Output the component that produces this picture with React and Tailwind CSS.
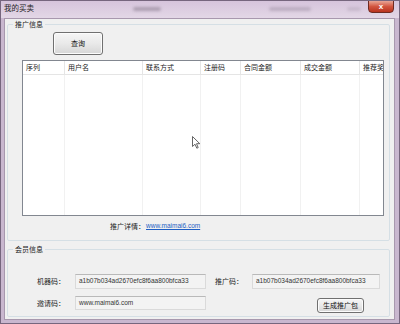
const cols = [
  { name: "序列", w: "w-[42px]" },
  { name: "用户名", w: "w-[78px]" },
  { name: "联系方式", w: "w-[58px]" },
  { name: "注册码", w: "w-[40px]" },
  { name: "合同金额", w: "w-[60px]" },
  { name: "成交金额", w: "w-[59px]" },
  { name: "推荐奖", w: "w-[60px]" },
];

function WinButton({ children, className }) {
  return (
    <button
      className={`border border-[#707070] rounded-[3px] bg-gradient-to-b from-[#f6f6f6] via-[#e9e9e9] to-[#d6d6d6] shadow-[inset_0_0_0_1px_#fcfcfc] flex items-center justify-center text-[7px] leading-none text-[#111] ${className}`}
    >
      {children}
    </button>
  );
}

function Field({ value, className }) {
  return (
    <div
      className={`bg-[#f3f3f3] border border-[#dadada] border-t-[#b9b9b9] flex items-center pl-[3px] text-[6.5px] text-[#333] leading-none ${className}`}
    >
      {value}
    </div>
  );
}

export default function App() {
  return (
    <div className="w-[400px] h-[324px] relative overflow-hidden flex flex-col bg-[#c9b7cf] border border-[#76667e] font-['Liberation_Sans','Noto_Sans_CJK_SC',sans-serif] text-[#1b1b1b]">
      {/* title bar */}
      <div className="h-[17px] flex items-start relative bg-gradient-to-b from-[#d6c4dc] to-[#e3d7e6]">
        <span className="ml-[3px] mt-[3px] text-[7.5px] leading-[9px] text-[#222]">我的买卖</span>
        <div className="absolute left-[132px] top-[6px] w-[28px] h-[4px] rounded-full bg-[#8d8092] opacity-60 blur-[1.5px]" />
        <div className="absolute left-[268px] top-[6px] w-[42px] h-[4px] rounded-full bg-[#9c8ea2] opacity-50 blur-[1.5px]" />
        <div className="absolute left-[346px] top-[6px] w-[14px] h-[4px] rounded-full bg-[#a99bae] opacity-40 blur-[1.5px]" />
        <div className="ml-auto mr-[5px] w-[26px] h-[13px] -mt-[1px] rounded-b-[4px] border border-[#6e2a22] bg-gradient-to-b from-[#e8a596] via-[#d2553f] to-[#b8311d] flex items-center justify-center">
          <span className="text-white text-[8px] leading-none font-bold">x</span>
        </div>
      </div>

      {/* client area */}
      <div className="flex-1 ml-[3px] mr-[4px] mb-[3px] bg-[#f0f0f0] border border-[#a898ae] flex flex-col">
        <fieldset className="mt-[1px] ml-[2px] mr-[4px] border border-[#d5dfe5] rounded-[2px] px-0 pb-[8px]">
          <legend className="ml-[5px] px-[2px] text-[7px] leading-[9px]">推广信息</legend>
          <WinButton className="mt-[3px] ml-[45px] w-[50px] h-[23px]">查询</WinButton>
          <div className="mt-[5px] ml-[14px] w-[362px] h-[156px] relative bg-white border border-[#828790] overflow-hidden">
            <div className="flex h-[14px] border-b border-[#e5e5e5] w-max">
              {cols.map((c) => (
                <div
                  key={c.name}
                  className={`${c.w} shrink-0 border-r border-[#e5e5e5] pl-[3px] flex items-center text-[7px] leading-none`}
                >
                  {c.name}
                </div>
              ))}
            </div>
            <div className="flex h-full w-max">
              {cols.map((c) => (
                <div key={c.name} className={`${c.w} shrink-0 border-r border-[#f1f1f1]`} />
              ))}
            </div>
            <svg
              className="absolute left-[169px] top-[75px]"
              width="9"
              height="13"
              viewBox="0 0 9 13"
            >
              <path
                d="M0.5 0.5 L0.5 10.5 L3 8.2 L4.8 12.2 L6.2 11.6 L4.5 7.7 L7.8 7.7 Z"
                fill="#fff"
                stroke="#555"
                strokeWidth="0.9"
              />
            </svg>
          </div>
          <div className="mt-[5px] ml-[102px] h-[11px] flex items-center text-[7px] leading-none">
            <span>推广详情：</span>
            <a className="ml-[1px] text-[6.5px] text-[#1f5fc4] underline">www.maimai6.com</a>
          </div>
        </fieldset>

        <fieldset className="mt-[4px] ml-[2px] mr-[4px] mb-[2px] flex-1 border border-[#d5dfe5] rounded-[2px] px-0">
          <legend className="ml-[5px] px-[2px] text-[7px] leading-[9px]">会员信息</legend>
          <div className="mt-[20px] pl-[29px] flex items-center text-[7px]">
            <span className="w-[38px] leading-none">机器码：</span>
            <Field value="a1b07b034ad2670efc8f6aa800bfca33" className="w-[131px] h-[15px]" />
            <span className="ml-[9px] w-[37px] leading-none">推广码：</span>
            <Field value="a1b07b034ad2670efc8f6aa800bfca33" className="w-[128px] h-[15px]" />
          </div>
          <div className="mt-[7px] pl-[29px] flex items-start text-[7px]">
            <span className="w-[38px] leading-none mt-[4px]">邀请码：</span>
            <Field value="www.maimai6.com" className="w-[131px] h-[14px]" />
            <WinButton className="ml-[111px] mt-[2px] w-[47px] h-[15px]">生成推广包</WinButton>
          </div>
        </fieldset>
      </div>
    </div>
  );
}
